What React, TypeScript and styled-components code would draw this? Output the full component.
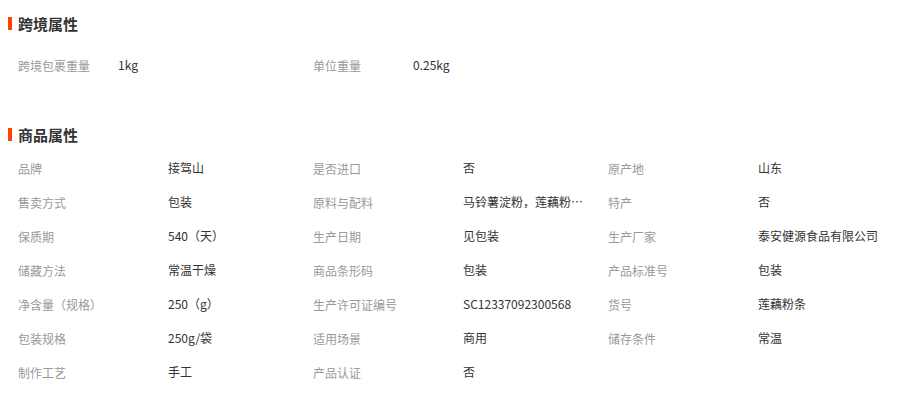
import React from "react";
import styled, { createGlobalStyle } from "styled-components";

const GlobalStyle = createGlobalStyle`
    body {
        margin: 0;
        background: #fff;
        font-family: "Noto Sans CJK SC", "Noto Sans", sans-serif;
    }
`;

type TAttr = {
    label: string
    value: string
}

const crossBorder: TAttr[] = [
    { label: "跨境包裹重量", value: "1kg" },
    { label: "单位重量", value: "0.25kg" }
];

const productAttrs: TAttr[] = [
    { label: "品牌", value: "接驾山" },
    { label: "是否进口", value: "否" },
    { label: "原产地", value: "山东" },
    { label: "售卖方式", value: "包装" },
    { label: "原料与配料", value: "马铃薯淀粉，莲藕粉，水" },
    { label: "特产", value: "否" },
    { label: "保质期", value: "540（天）" },
    { label: "生产日期", value: "见包装" },
    { label: "生产厂家", value: "泰安健源食品有限公司" },
    { label: "储藏方法", value: "常温干燥" },
    { label: "商品条形码", value: "包装" },
    { label: "产品标准号", value: "包装" },
    { label: "净含量（规格）", value: "250（g）" },
    { label: "生产许可证编号", value: "SC12337092300568" },
    { label: "货号", value: "莲藕粉条" },
    { label: "包装规格", value: "250g/袋" },
    { label: "适用场景", value: "商用" },
    { label: "储存条件", value: "常温" },
    { label: "制作工艺", value: "手工" },
    { label: "产品认证", value: "否" }
];

const App = () => {
    const mapFunc = ({ label, value }: TAttr) => (
        <React.Fragment key={label}>
            <Label>{label}</Label>
            <Value>{value}</Value>
        </React.Fragment>
    );

    return (
        <>
            <GlobalStyle />
            <Page>
                <Section>
                    <Title>跨境属性</Title>
                    <AttrGrid labelWidth={100} top={15}>
                        {crossBorder.map(mapFunc)}
                    </AttrGrid>
                </Section>
                <Section>
                    <Title>商品属性</Title>
                    <AttrGrid labelWidth={150} top={7}>
                        {productAttrs.map(mapFunc)}
                    </AttrGrid>
                </Section>
            </Page>
        </>
    );
};

export default App;

const Page = styled.div`
    width: 916px;
    padding: 13px 0 0 8px;
    box-sizing: border-box;
    display: flex;
    flex-direction: column;
    row-gap: 42px;
`;

const Section = styled.section`
    display: flex;
    flex-direction: column;
`;

const Title = styled.h3`
    margin: 0;
    display: flex;
    align-items: center;
    column-gap: 6px;
    height: 20px;
    font-size: 15px;
    font-weight: bold;
    color: #333;

    &::before {
        content: "";
        width: 4px;
        height: 13px;
        margin-top: 1px;
        background: #ff4400;
    }
`;

const AttrGrid = styled.div<{ labelWidth: number; top: number }>`
    display: grid;
    grid-template-columns: repeat(3, ${({ labelWidth }) => labelWidth}px ${({ labelWidth }) => 295 - labelWidth}px);
    grid-auto-rows: 34px;
    margin-top: ${({ top }) => top}px;
    padding-left: 10px;
    font-size: 12px;
`;

const Label = styled.div`
    display: flex;
    align-items: center;
    color: #999;
    white-space: nowrap;
`;

const Value = styled.div`
    line-height: 34px;
    color: #333;
    padding-right: 20px;
    white-space: nowrap;
    overflow: hidden;
    text-overflow: ellipsis;
`;
